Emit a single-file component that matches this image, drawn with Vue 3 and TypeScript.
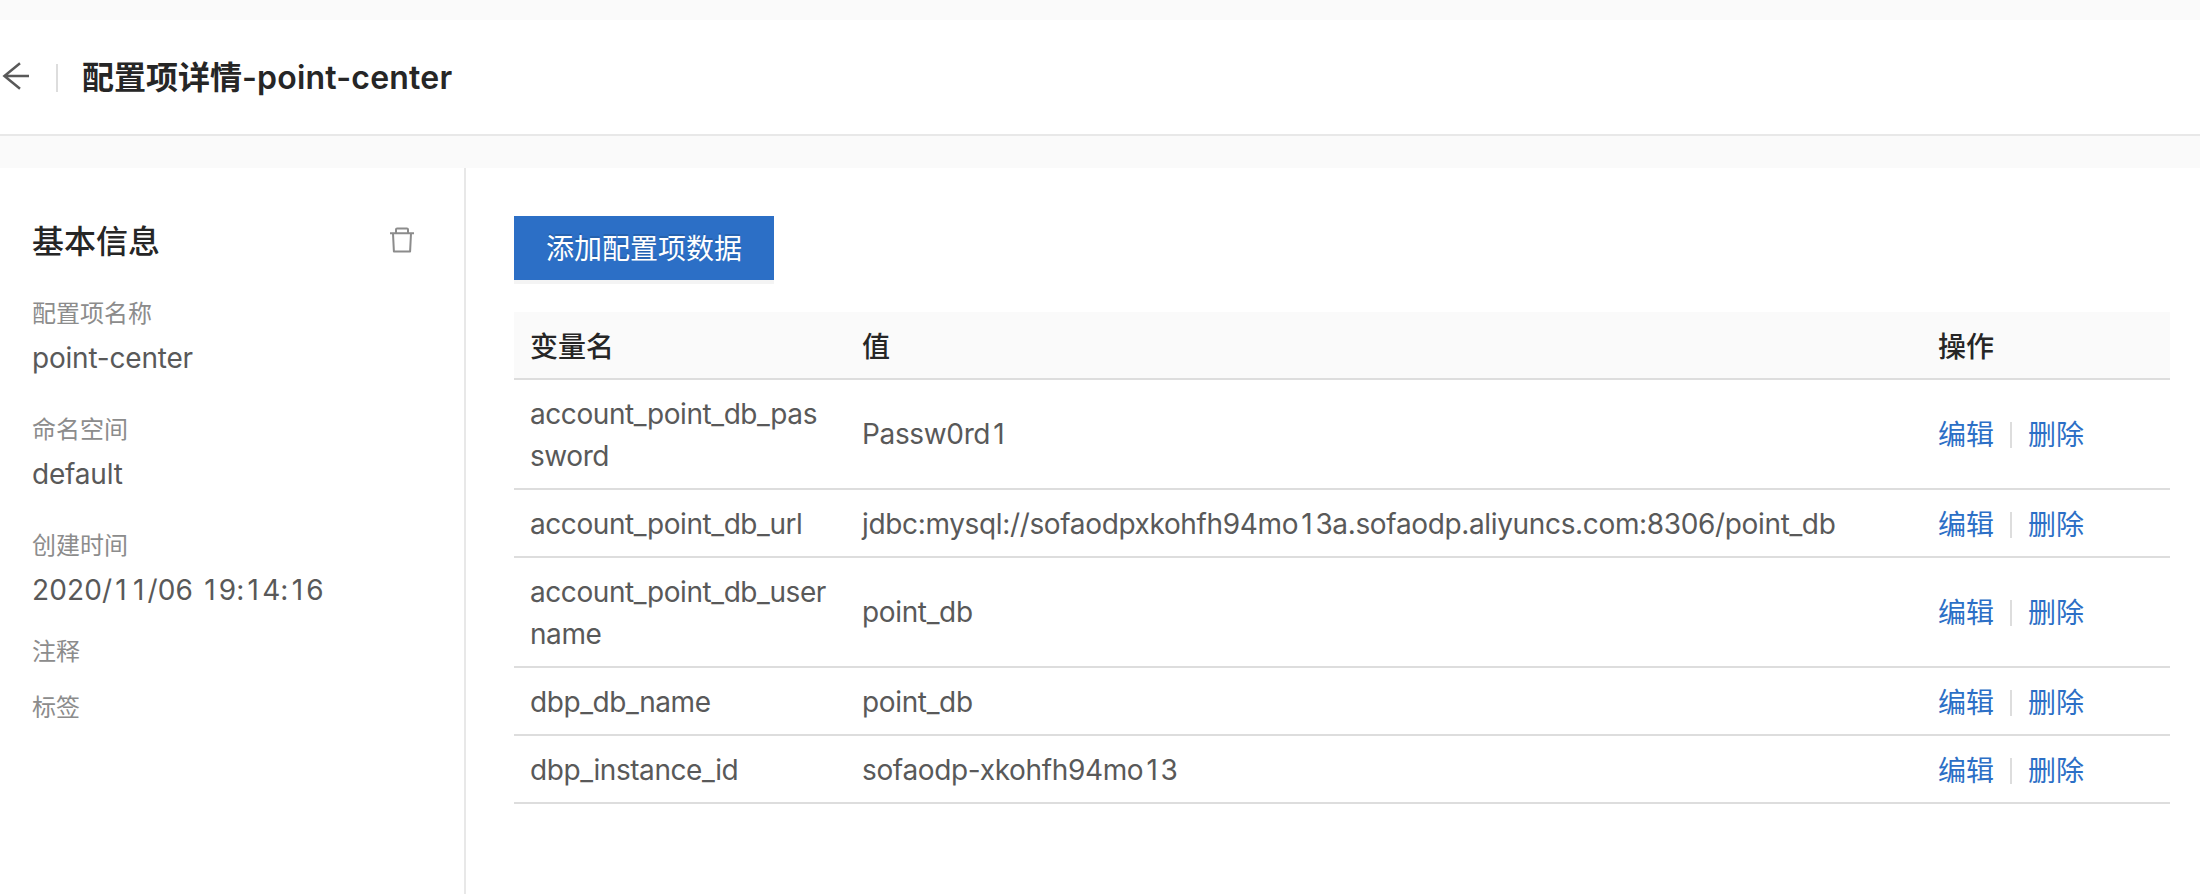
<script setup lang="ts">
interface InfoItem {
  label: string
  value?: string
  numeric?: boolean
}

interface ConfigEntry {
  name: string
  value: string
}

const configName = 'point-center'

const info: InfoItem[] = [
  { label: '配置项名称', value: configName },
  { label: '命名空间', value: 'default' },
  { label: '创建时间', value: '2020/11/06 19:14:16', numeric: true },
]

const extras: InfoItem[] = [{ label: '注释' }, { label: '标签' }]

const entries: ConfigEntry[] = [
  { name: 'account_point_db_password', value: 'Passw0rd1' },
  { name: 'account_point_db_url', value: 'jdbc:mysql://sofaodpxkohfh94mo13a.sofaodp.aliyuncs.com:8306/point_db' },
  { name: 'account_point_db_username', value: 'point_db' },
  { name: 'dbp_db_name', value: 'point_db' },
  { name: 'dbp_instance_id', value: 'sofaodp-xkohfh94mo13' },
]

// Names longer than this wrap onto a second line.
const NAME_LINE_LENGTH = 21

// Isolates each "1" so that it can take the width of the other digits.
function segments(text = ''): string[] {
  return text.split(/(1)/).filter((part) => part !== '')
}
</script>

<template>
  <div class="page">
    <header class="page-header">
      <svg class="back" width="28" height="28" viewBox="0 0 28 28" aria-hidden="true">
        <path d="M28 14H3M19 1.2L3.4 14L19 26.8" fill="none" stroke="currentColor" stroke-width="2.5" />
      </svg>
      <span class="header-divider"></span>
      <h1 class="title">配置项详情<span class="title-name">-{{ configName }}</span></h1>
    </header>

    <div class="body">
      <aside class="sidebar">
        <div class="sidebar-head">
          <h2 class="sidebar-title">基本信息</h2>
          <svg class="trash" width="24" height="26" viewBox="0 0 24 26" aria-hidden="true">
            <path
              d="M0 6.2H24M6 6V2.6Q6 1.5 7.1 1.5H16.9Q18 1.5 18 2.6V6M3 6.5L3.9 24.4H20.1L21 6.5"
              fill="none"
              stroke="currentColor"
              stroke-width="2"
              stroke-linejoin="round"
            />
          </svg>
        </div>
        <dl class="info">
          <div v-for="item in info" :key="item.label" class="info-item">
            <dt>{{ item.label }}</dt>
            <dd :class="{ numeric: item.numeric }"><span v-for="(part, i) in segments(item.value)" :key="i" :class="{ one: part === '1' }">{{ part }}</span></dd>
          </div>
        </dl>
        <div class="extras">
          <div v-for="item in extras" :key="item.label" class="extra">{{ item.label }}</div>
        </div>
      </aside>

      <main class="content">
        <button class="add" type="button">添加配置项数据</button>
        <table class="table">
          <colgroup>
            <col class="col-name" />
            <col class="col-value" />
            <col class="col-action" />
          </colgroup>
          <thead>
            <tr>
              <th>变量名</th>
              <th>值</th>
              <th>操作</th>
            </tr>
          </thead>
          <tbody>
            <tr v-for="entry in entries" :key="entry.name" :class="{ tall: entry.name.length > NAME_LINE_LENGTH }">
              <td class="name">{{ entry.name }}</td>
              <td><span v-for="(part, i) in segments(entry.value)" :key="i" :class="{ one: part === '1' }">{{ part }}</span></td>
              <td>
                <div class="actions">
                  <a>编辑</a>
                  <span class="action-divider"></span>
                  <a>删除</a>
                </div>
              </td>
            </tr>
          </tbody>
        </table>
      </main>
    </div>
  </div>
</template>

<style>
body {
  margin: 0;
  background: #fff;
}
</style>

<style scoped>
.page {
  box-sizing: border-box;
  height: 894px;
  overflow: hidden;
  padding-top: 20px;
  display: flex;
  flex-direction: column;
  background: #fafafa;
  color: #595959;
  font-family: Inter, 'Noto Sans CJK SC', sans-serif;
  font-size: 28px;
  line-height: 42px;
}

.one {
  margin: 0 3.1px;
}

.page-header {
  box-sizing: border-box;
  flex: none;
  height: 116px;
  display: flex;
  align-items: center;
  padding-bottom: 2px;
  border-bottom: 2px solid #e8e8e8;
  background: #fff;
}

.back {
  flex: none;
  width: 28px;
  margin-left: 1px;
  color: #595959;
}

.header-divider {
  width: 2px;
  height: 28px;
  margin: 4px 24px 0 27px;
  background: #ddd;
}

.title {
  margin: 0;
  padding-top: 3px;
  font-size: 32px;
  line-height: 48px;
  font-weight: 600;
  color: #262626;
}

.title-name {
  letter-spacing: 0.2px;
}

.body {
  flex: 1;
  display: flex;
  margin-top: 32px;
  background: #fff;
}

.sidebar {
  box-sizing: border-box;
  flex: none;
  width: 466px;
  padding: 49px 50px 0 32px;
  border-right: 2px solid #e8e8e8;
}

.sidebar-head {
  display: flex;
  align-items: center;
  justify-content: space-between;
}

.sidebar-title {
  margin: 0;
  padding-top: 1px;
  margin-bottom: -1px;
  font-size: 32px;
  line-height: 48px;
  font-weight: 500;
  color: #262626;
}

.trash {
  margin-bottom: 2px;
  color: #8c8c8c;
}

.info {
  margin: 31px 0 0;
}

.info-item {
  height: 116px;
}

dt,
.extra {
  font-size: 24px;
  line-height: 36px;
  color: #8c8c8c;
}

dd {
  margin: 5px 0 0;
  letter-spacing: -0.2px;
}

dd.numeric {
  letter-spacing: 0.12px;
}

.extras {
  display: flex;
  flex-direction: column;
  gap: 20px;
  margin-top: -10px;
}

.content {
  flex: 1;
  padding: 48px 30px 0 48px;
}

.add {
  display: block;
  height: 64px;
  padding: 2px 32px 0;
  border: 0;
  background: #2c6fc6;
  box-shadow: 0 4px 0 rgba(0, 0, 0, 0.043);
  color: #fff;
  font: inherit;
  text-shadow: 0 -2px 0 rgba(0, 0, 0, 0.12);
}

.table {
  width: 1656px;
  margin-top: 32px;
  border-collapse: separate;
  border-spacing: 0;
  table-layout: fixed;
}

.col-name {
  width: 332px;
}

.col-value {
  width: 1076px;
}

.col-action {
  width: 248px;
}

th,
td {
  padding: 13px 16px 11px;
  border-bottom: 2px solid #ddd;
  text-align: left;
  vertical-align: middle;
  word-break: break-all;
}

th {
  padding: 14px 16px 10px;
  background: #fafafa;
  color: #262626;
  font-weight: 500;
}

td {
  letter-spacing: -0.35px;
}

td.name {
  letter-spacing: -0.43px;
}

.tall td:not(:first-child) {
  padding: 12px 16px;
}

.actions {
  display: flex;
  align-items: center;
  padding-top: 1px;
  margin-bottom: -1px;
  letter-spacing: 0;
}

.actions a {
  color: #2c6fc6;
}

.action-divider {
  width: 2px;
  height: 26px;
  margin: 0 16px;
  background: #ddd;
}
</style>
